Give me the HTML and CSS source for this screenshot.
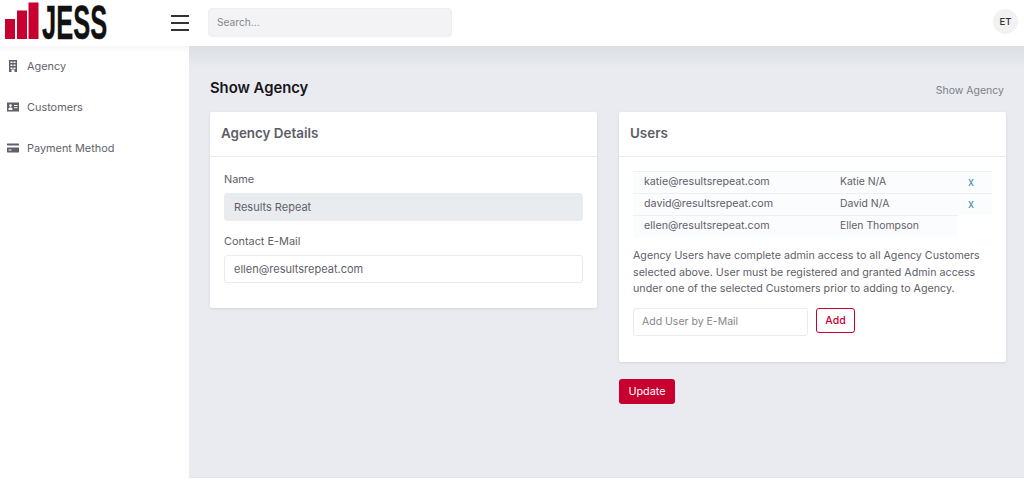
FILE: index.html
```html
<!DOCTYPE html>
<html lang="en">
<head>
<meta charset="utf-8">
<title>Show Agency</title>
<link rel="stylesheet" href="styles.css">
</head>
<body>
<header class="topbar">
  <div class="logo">
    <svg class="logo-bars" width="34" height="37" viewBox="0 0 34 37"><rect x="0" y="17" width="10" height="20" fill="#c8002f"/><rect x="12" y="8.500" width="10" height="28.500" fill="#c8002f"/><rect x="23.500" y="0.500" width="10" height="36.500" fill="#c8002f"/></svg>
    <span class="logo-text">JESS</span>
  </div>
  <button class="burger" aria-label="Menu"><span></span><span></span><span></span></button>
  <div class="search">Search...</div>
  <div class="avatar">ET</div>
</header>
<div class="body">
  <nav class="sidebar">
    <a class="nav-item"><svg width="14" height="14" viewBox="0 0 14 14"><path fill="#5f6069" d="M3 1h8v12H8.500v-2.500h-3V13H3zM4.500 2.500v1.500h2V2.500zm3 0v1.500h2V2.500zm-3 3v1.500h2V5.500zm3 0v1.500h2V5.500zm-3 3V10h2V8.500zm3 0V10h2V8.500z" fill-rule="evenodd"/></svg>Agency</a>
    <a class="nav-item"><svg width="14" height="14" viewBox="0 0 14 14"><path fill="#5f6069" fill-rule="evenodd" d="M1 2.500h12v9H1zM2.500 8.800V10h4V8.800c0-.7-.8-1.200-2-1.200s-2 .5-2 1.200zM4.500 4.300a1.300 1.300 0 1 0 0 2.600 1.300 1.300 0 0 0 0-2.600zM8 5v1h3.500V5zm0 2.200v1h3.500v-1z"/></svg>Customers</a>
    <a class="nav-item"><svg width="14" height="14" viewBox="0 0 14 14"><path fill="#5f6069" fill-rule="evenodd" d="M2 2.500h10.500a.7.700 0 0 1 .5.700v1.300H1V3.200a.7.700 0 0 1 1-.7zM1 6.500h12v4.300a.7.700 0 0 1-.7.700H1.700a.7.700 0 0 1-.7-.7zM2.500 8.500v1h3v-1z"/></svg>Payment Method</a>
  </nav>
  <main class="main">
    <div class="page-head">
      <h1>Show Agency</h1>
      <span class="crumb">Show Agency</span>
    </div>
    <div class="columns">
      <section class="col">
        <div class="card">
          <h2 class="card-title">Agency Details</h2>
          <div class="card-body form">
            <label>Name</label>
            <div class="field disabled">Results Repeat</div>
            <label class="second">Contact E-Mail</label>
            <div class="field">ellen@resultsrepeat.com</div>
          </div>
        </div>
      </section>
      <section class="col">
        <div class="card">
          <h2 class="card-title">Users</h2>
          <div class="card-body users">
            <div class="row"><span class="mail">katie@resultsrepeat.com</span><span class="who">Katie N/A</span><a class="del">x</a></div>
            <div class="row"><span class="mail">david@resultsrepeat.com</span><span class="who">David N/A</span><a class="del">x</a></div>
            <div class="row short"><span class="mail">ellen@resultsrepeat.com</span><span class="who">Ellen Thompson</span></div>
            <p class="note">Agency Users have complete admin access to all Agency Customers selected above. User must be registered and granted Admin access under one of the selected Customers prior to adding to Agency.</p>
            <div class="add-line">
              <div class="field add-field">Add User by E-Mail</div>
              <button class="btn-outline">Add</button>
            </div>
          </div>
        </div>
        <button class="btn-primary">Update</button>
      </section>
    </div>
  </main>
</div>
</body>
</html>
```
FILE: styles.css
```css
* { box-sizing: border-box; }
html, body { margin: 0; height: 486px; overflow: hidden; }
body {
  font-family: Inter, "Open Sans", sans-serif;
  font-size: 10.900px;
  color: #5f6069;
  background: #fff;
}
.topbar {
  height: 46px;
  display: flex;
  align-items: center;
  background: #fff;
  position: relative;
  z-index: 2;
}
.logo { width: 171px; height: 46px; display: flex; align-items: flex-start; padding: 2px 0 0 5px; flex: none; }
.logo-bars { flex: none; }
.logo-text {
  font-family: "Liberation Sans", sans-serif;
  font-weight: 700;
  font-size: 49px;
  line-height: 46px;
  color: #111;
  display: inline-block;
  transform: scaleX(.52);
  transform-origin: 0 50%;
  margin: -3px 0 0 3px;
  -webkit-text-stroke: .4px #111;
}
.burger {
  width: 18px; height: 16px; padding: 0; margin: 0 19px 0 0;
  border: 0; background: none; display: flex; flex-direction: column; justify-content: space-between; flex: none;
}
.burger span { display: block; height: 2px; background: #333; }
.search {
  width: 244px; height: 29px; background: #f3f3f5; border: 1px solid #eeeef0; border-radius: 4px;
  padding: 0 8px; line-height: 26px; color: #85868e; font-size: 10.200px; margin-top: -2px;
}
.avatar {
  margin-left: auto; margin-right: 6px; width: 25px; height: 25px; border-radius: 50%;
  background: #f2f2f3; color: #333; font-size: 9.500px; font-weight: 500; text-align: center; line-height: 25px; margin-top: -3px;
}
.body { display: flex; height: 440px; }
.sidebar { width: 189px; flex: none; padding-top: 0; background: #fff; box-shadow: inset 0 10px 10px -10px rgba(0,0,0,.08); }
.nav-item { display: flex; align-items: center; height: 41px; padding: 0 0 1px 6px; gap: 7px; color: #62636c; }
.nav-item svg { flex: none; }
.main {
  flex: 1; height: 432px; background: #e9ebf0 linear-gradient(#dcdfe3, #e9ebf0 22px);
  padding: 0 18px 0 21px; border-bottom: 1px solid #e4e6eb;
}
.page-head { height: 66px; display: flex; justify-content: space-between; align-items: flex-start; padding-top: 32px; }
h1 { margin: 1px 0 0; font-size: 14.800px; line-height: 19px; font-weight: 600; color: #16161a; }
.crumb { font-size: 10.500px; color: #7d7e86; padding: 5px 2px 0 0; line-height: 15px; }
.columns { display: grid; grid-template-columns: 387px 387px; column-gap: 22px; align-items: start; }
.card { background: #fff; border-radius: 2px; box-shadow: 0 1px 3px rgba(60,70,90,.12); }
.card-title { margin: 0; height: 45px; padding: 0 11px; font-size: 13.400px; line-height: 43px; font-weight: 600; color: #5c5d66; border-bottom: 1px solid #e9ebef; }
.form { padding: 14px 14px 25px 14px; height: 151px; }
.form label { display: block; height: 22px; line-height: 17px; }
.form label.second { margin-top: 12px; height: 22px; }
.field { height: 28px; border: 1px solid #e9ebef; border-radius: 3px; padding: 0 9px; line-height: 26px; font-size: 11px; color: #5f6069; background: #fff; }
.field.disabled { background: #e9ecef; border-color: #e9ecef; }
.users { padding: 14px 14px 26px 14px; }
.row { display: flex; height: 22px; align-items: center; background: #fbfcfd; border-top: 1px solid #eef0f3; padding: 0 0 1px 11px; font-size: 10.700px; line-height: 18px; }
.row.short { width: 325px; }
.mail { width: 196px; flex: none; }
.who { width: 128px; flex: none; font-size: 10.400px; }
.del { color: #3a87ad; font-size: 11px; }
.note { margin: 11px 0 0; font-size: 10.700px; line-height: 16.700px; }
.add-line { display: flex; align-items: flex-start; gap: 8px; margin-top: 10px; }
.add-field { width: 175px; color: #85868e; font-size: 10.500px; padding-left: 8px; }
.btn-outline { width: 39px; height: 25px; padding: 0; background: #fff; border: 1px solid #c8002f; border-radius: 3px; color: #c8002f; font: 500 10.500px Inter, sans-serif; }
.btn-primary { display: block; margin-top: 17px; width: 56px; height: 25px; padding: 0; background: #c8002f; border: 0; border-radius: 3px; color: #fff; font: 400 10.800px Inter, sans-serif; }
```
